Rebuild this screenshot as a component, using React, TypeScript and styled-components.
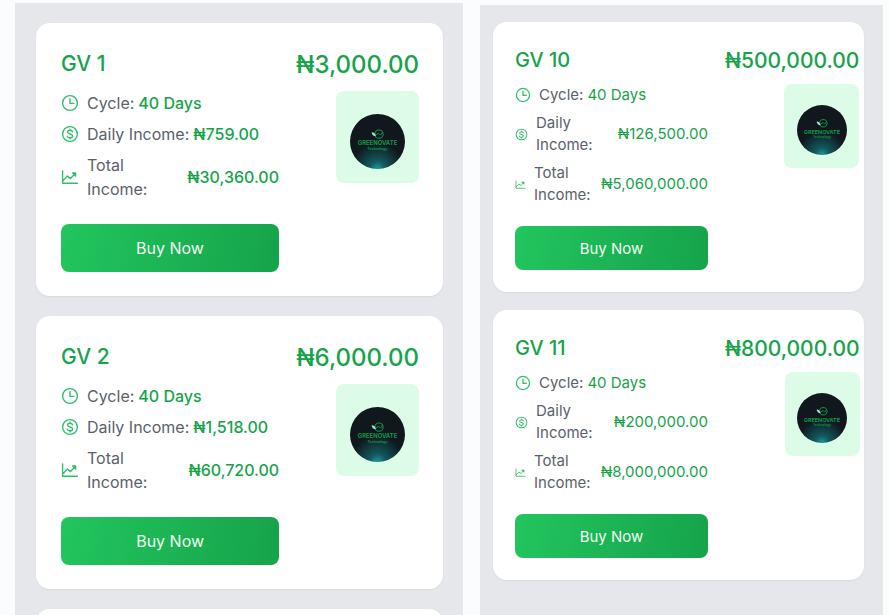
import React from "react";
import styled, { createGlobalStyle, css } from "styled-components";

type Size = "large" | "compact";
interface Sized {
  $size: Size;
}

const GlobalStyle = createGlobalStyle`
  *, *::before, *::after { box-sizing: border-box; }
  body {
    margin: 0;
    background: #fbfcfe;
    font-family: Inter, Roboto, "Liberation Sans", sans-serif;
  }
`;

const Page = styled.main`
  display: grid;
  grid-template-columns: minmax(0, 448fr) minmax(0, 403fr);
  gap: 17px;
  height: 100vh;
  padding: 0 6px 0 15px;
  overflow: hidden;
`;

const Panel = styled.section<Sized>`
  display: flex;
  flex-direction: column;
  background: #e5e7eb;
  ${({ $size }) =>
    $size === "large"
      ? css`
          gap: 20px;
          margin-top: 3px;
          padding: 20px 20px 0 21px;
        `
      : css`
          gap: 18px;
          margin-top: 5px;
          padding: 17px 19px 0 13px;
        `}
`;

const Card = styled.article<Sized>`
  display: grid;
  flex-shrink: 0;
  grid-template-columns: minmax(59%, 1fr) auto;
  align-items: start;
  border-radius: 14px;
  background: #ffffff;
  box-shadow: 0 1px 2px rgba(0, 0, 0, 0.06);
  ${({ $size }) =>
    $size === "large"
      ? css`
          column-gap: 17px;
          padding: 24px 24px 24px 25px;
        `
      : css`
          column-gap: 17px;
          padding: 22px;
        `}
`;

const Title = styled.h2<Sized>`
  margin: 0;
  color: #16a34a;
  font-weight: 500;
  ${({ $size }) =>
    $size === "large"
      ? css`
          margin-bottom: 10px;
          font-size: 21px;
          line-height: 34px;
        `
      : css`
          margin-bottom: 8px;
          font-size: 20px;
          line-height: 32px;
        `}
`;

const Details = styled.ul<Sized>`
  display: flex;
  flex-direction: column;
  gap: ${({ $size }) => ($size === "large" ? 7 : 6)}px;
  margin: 0;
  padding: 0;
  list-style: none;
  font-size: ${({ $size }) => ($size === "large" ? 16 : 15)}px;
  line-height: ${({ $size }) => ($size === "large" ? 24 : 22)}px;
`;

const Detail = styled.li`
  display: flex;
  align-items: center;
`;

const Label = styled.span<{ $wrap: boolean }>`
  margin: 0 4px 0 8px;
  color: #5b616b;
  ${({ $wrap }) =>
    $wrap &&
    css`
      width: min-content;
      margin-right: auto;
    `}
`;

const Value = styled.span<Sized>`
  color: #16a34a;
  font-weight: ${({ $size }) => ($size === "large" ? 500 : 400)};
  white-space: nowrap;
`;

const BuyButton = styled.button<Sized>`
  display: block;
  width: 100%;
  border: 0;
  border-radius: 8px;
  background: linear-gradient(100deg, #22c55e, #16a34a);
  color: #effdf3;
  font-family: inherit;
  cursor: pointer;
  ${({ $size }) =>
    $size === "large"
      ? css`
          height: 48px;
          margin-top: 23px;
          font-size: 16px;
        `
      : css`
          height: 44px;
          margin-top: 20px;
          font-size: 15px;
        `}
`;

const PriceColumn = styled.div`
  display: flex;
  flex-direction: column;
  align-items: flex-end;
`;

const Price = styled.p<Sized>`
  margin: 0;
  color: #16a34a;
  font-weight: 500;
  white-space: nowrap;
  ${({ $size }) =>
    $size === "large"
      ? css`
          margin-bottom: 8px;
          font-size: 24px;
          line-height: 36px;
        `
      : css`
          margin-bottom: 6px;
          font-size: 21px;
          line-height: 34px;
        `}
`;

const LogoTile = styled.div<Sized>`
  display: flex;
  align-items: center;
  justify-content: center;
  padding-top: 8px;
  border-radius: 8px;
  background: #dcfce7;
  width: ${({ $size }) => ($size === "large" ? 83 : 75)}px;
  height: ${({ $size }) => ($size === "large" ? 92 : 84)}px;
`;

const Glyph = styled.svg`
  flex-shrink: 0;
  fill: none;
  stroke: #34bd6c;
  stroke-width: 1.4;
  stroke-linecap: round;
  stroke-linejoin: round;
`;

type IconName = "clock" | "dollar" | "chart";

function Icon({ name, size }: { name: IconName; size: number }) {
  return (
    <Glyph width={size} height={size} viewBox="0 0 18 18" aria-hidden="true">
      {name !== "chart" && <circle cx="9" cy="9" r="7.4" />}
      {name === "clock" && <path d="M9 4.6V9.4H12.8" />}
      {name === "dollar" && (
        <path d="M11.5 6.8C11.2 5.8 10.2 5.3 9 5.3C7.5 5.3 6.5 6 6.5 7.1C6.5 9.6 11.6 8.3 11.6 10.9C11.6 12 10.5 12.8 9 12.8C7.6 12.8 6.6 12.2 6.3 11.1M9 4.2V5.3M9 12.8V13.9" />
      )}
      {name === "chart" && (
        <>
          <path d="M1.6 3V15.2H16.4M2.4 12.4L6.4 8L9.4 10.6L13.6 6.2" />
          <path d="M11.6 5H14.6V8Z" fill="#34bd6c" />
        </>
      )}
    </Glyph>
  );
}

function Logo({ id, size }: { id: string; size: number }) {
  return (
    <svg width={size} height={size} viewBox="0 0 56 56" role="img" aria-label="Greenovate">
      <defs>
        <radialGradient id={id} cx="0.5" cy="1" r="0.48">
          <stop offset="0" stopColor="#1f9a9c" />
          <stop offset="0.3" stopColor="#12595e" />
          <stop offset="1" stopColor="#10181d" />
        </radialGradient>
      </defs>
      <circle cx="28" cy="28" r="28" fill={`url(#${id})`} />
      <circle cx="29.5" cy="20.5" r="4.2" fill="none" stroke="#128a48" strokeWidth="1.2" />
      <path d="M26.5 21.5L29 19.5L31 21.5L33 18.5" fill="none" stroke="#128a48" strokeWidth="1" />
      <path d="M22 18.5C24.5 18.5 26 19.8 26.4 22.6C23.8 22.5 22.3 21.2 22 18.5Z" fill="#9be8c0" />
      <text x="28" y="32" textAnchor="middle" fontSize="6" fontWeight="700" fill="#14944a">
        GREENOVATE
      </text>
      <text x="28" y="36.6" textAnchor="middle" fontSize="3.6" fontWeight="600" fill="#14944a">
        Technology
      </text>
    </svg>
  );
}

interface Plan {
  name: string;
  price: string;
  daily: string;
  total: string;
}

const iconSizes: Record<Size, Record<IconName, number>> = {
  large: { clock: 18, dollar: 18, chart: 18 },
  compact: { clock: 16, dollar: 13, chart: 11 },
};

function PlanCard({ plan, size }: { plan: Plan; size: Size }) {
  const rows: { icon: IconName; label: string; value: string; wrap: boolean }[] = [
    { icon: "clock", label: "Cycle:", value: "40 Days", wrap: false },
    { icon: "dollar", label: "Daily Income:", value: plan.daily, wrap: size === "compact" },
    { icon: "chart", label: "Total Income:", value: plan.total, wrap: true },
  ];
  return (
    <Card $size={size}>
      <div>
        <Title $size={size}>{plan.name}</Title>
        <Details $size={size}>
          {rows.map((row) => (
            <Detail key={row.icon}>
              <Icon name={row.icon} size={iconSizes[size][row.icon]} />
              <Label $wrap={row.wrap}>{row.label}</Label>
              <Value $size={size}>{row.value}</Value>
            </Detail>
          ))}
        </Details>
        <BuyButton $size={size} type="button">
          Buy Now
        </BuyButton>
      </div>
      <PriceColumn>
        <Price $size={size}>{plan.price}</Price>
        <LogoTile $size={size}>
          <Logo id={`glow-${plan.name.replace(" ", "")}`} size={size === "large" ? 55 : 50} />
        </LogoTile>
      </PriceColumn>
    </Card>
  );
}

const starterPlans: Plan[] = [
  { name: "GV 1", price: "₦3,000.00", daily: "₦759.00", total: "₦30,360.00" },
  { name: "GV 2", price: "₦6,000.00", daily: "₦1,518.00", total: "₦60,720.00" },
];

const premiumPlans: Plan[] = [
  { name: "GV 10", price: "₦500,000.00", daily: "₦126,500.00", total: "₦5,060,000.00" },
  { name: "GV 11", price: "₦800,000.00", daily: "₦200,000.00", total: "₦8,000,000.00" },
];

export default function App() {
  return (
    <>
      <GlobalStyle />
      <Page>
        <Panel $size="large">
          {starterPlans.map((plan) => (
            <PlanCard key={plan.name} plan={plan} size="large" />
          ))}
          <Card $size="large" />
        </Panel>
        <Panel $size="compact">
          {premiumPlans.map((plan) => (
            <PlanCard key={plan.name} plan={plan} size="compact" />
          ))}
        </Panel>
      </Page>
    </>
  );
}
